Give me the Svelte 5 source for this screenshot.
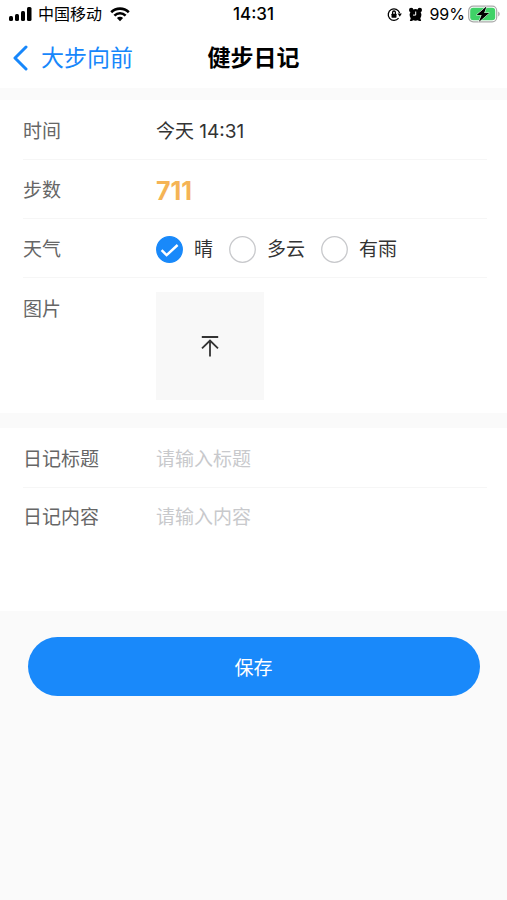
<script lang="ts">
  const weathers = ["晴", "多云", "有雨"];

  let weather = $state("晴");
  let title = $state("");
  let content = $state("");
</script>

<svelte:head>
  <title>健步日记</title>
</svelte:head>

<div class="page">
  <header>
    <div class="status">
      <div class="carrier">
        <svg width="24" height="16" viewBox="0 0 24 16" aria-hidden="true">
          <rect x="1" y="10" width="4" height="5" rx="1.5" />
          <rect x="7" y="8" width="4" height="7" rx="1.5" />
          <rect x="13" y="5" width="4" height="10" rx="1.5" />
          <rect x="19" y="1" width="4.5" height="14" rx="1.5" />
        </svg>
        <span>中国移动</span>
        <svg class="wifi" width="20" height="15" viewBox="0 0 20 15" aria-hidden="true">
          <path d="M1.2 5.2a12.6 12.6 0 0 1 17.6 0" />
          <path d="M4.4 8.6a8 8 0 0 1 11.2 0" />
          <path class="dot" d="M10 14.2 6.9 11.1a4.4 4.4 0 0 1 6.2 0z" />
        </svg>
      </div>
      <time>14:31</time>
      <div class="power">
        <svg width="15" height="15" viewBox="0 0 15 15" aria-hidden="true">
          <path class="ring" d="M11.6 11.2A5.8 5.8 0 1 1 12.6 6" />
          <path d="M10.6 6.6h4.2l-2 3.2z" />
          <rect x="4.5" y="6.7" width="5" height="4" rx="0.6" />
          <path class="ring" d="M5.6 7V5.4a1.4 1.4 0 0 1 2.8 0V7" />
        </svg>
        <svg width="15" height="15" viewBox="0 0 15 15" aria-hidden="true">
          <circle cx="7.5" cy="7.8" r="5.9" />
          <circle cx="3.2" cy="3" r="2.2" />
          <circle cx="11.8" cy="3" r="2.2" />
          <path d="M3 10.5 1.8 14h2.4L6 12zM12 10.5l1.2 3.5h-2.4L9 12z" />
          <path class="hands" d="M7.7 4.5v3.6H5" />
        </svg>
        <span>99%</span>
        <svg class="battery" width="33" height="18" viewBox="0 0 33 18" aria-hidden="true">
          <rect class="case" x="0.7" y="1.2" width="28" height="15.6" rx="4.5" />
          <rect class="charge" x="2.2" y="2.8" width="25" height="12.4" rx="3" />
          <path class="tip" d="M30.2 6.5c1.9.7 1.9 4.3 0 5z" />
          <path class="bolt" d="M18.6 1.2 8.6 9.9h5l-2.8 7 10.4-8.8h-5z" />
        </svg>
      </div>
    </div>
    <nav>
      <a href="#back">
        <svg width="16" height="26" viewBox="0 0 16 26" aria-hidden="true">
          <path d="M14 2 3 13l11 11" />
        </svg>
        大步向前
      </a>
      <h1>健步日记</h1>
    </nav>
  </header>

  <form onsubmit={(e) => e.preventDefault()}>
    <section>
      <div class="row">
        <span class="label">时间</span>
        <span>今天 14:31</span>
      </div>
      <div class="row">
        <span class="label">步数</span>
        <strong>711</strong>
      </div>
      <div class="row">
        <span class="label" id="weather-label">天气</span>
        <div class="options" role="radiogroup" aria-labelledby="weather-label">
          {#each weathers as item (item)}
            <label class="option">
              <input type="radio" name="weather" value={item} bind:group={weather} />
              <svg class="tick" width="27" height="27" viewBox="0 0 27 27" aria-hidden="true">
                <circle cx="13.5" cy="13.5" r="12.8" />
                {#if weather === item}
                  <path d="m5.6 14.2 5 5L21.6 9" />
                {/if}
              </svg>
              {item}
            </label>
          {/each}
        </div>
      </div>
      <div class="row picture">
        <span class="label">图片</span>
        <button type="button" class="upload" aria-label="图片">
          <svg width="18" height="22" viewBox="0 0 18 22" aria-hidden="true">
            <path d="M.8 2h16.4M9 21.4V5.4M1 13.4l8-7.8 8 7.8" />
          </svg>
        </button>
      </div>
    </section>

    <section>
      <div class="row">
        <label class="label" for="title">日记标题</label>
        <input id="title" type="text" placeholder="请输入标题" bind:value={title} />
      </div>
      <div class="row content">
        <label class="label" for="content">日记内容</label>
        <textarea id="content" placeholder="请输入内容" bind:value={content}></textarea>
      </div>
    </section>

    <button type="submit" class="save">保存</button>
  </form>
</div>

<style>
  :global(body) {
    background: #fafafa;
  }
  .page {
    color: #333;
    font-family: Inter, "Noto Sans CJK SC", sans-serif;
    font-size: 19px;
    line-height: 28px;
  }
  header {
    background: #fff;
    color: #000;
  }
  .status {
    display: grid;
    grid-template-columns: 1fr auto 1fr;
    align-items: center;
    height: 28px;
    padding: 0 8px;
    font-size: 16px;
  }
  .carrier,
  .power {
    display: flex;
    align-items: center;
    gap: 6px;
  }
  .power {
    justify-content: flex-end;
  }
  time {
    font-size: 17px;
    font-weight: 500;
  }
  svg {
    display: block;
    flex: none;
  }
  .wifi {
    margin-left: 2px;
  }
  .battery {
    margin: 0 -2px 0 -3px;
  }
  .wifi path,
  .ring {
    fill: none;
    stroke: #000;
    stroke-width: 2.6;
  }
  .wifi .dot {
    fill: #000;
    stroke: none;
  }
  .ring {
    stroke-width: 1.3;
  }
  .hands {
    fill: none;
    stroke: #fff;
    stroke-width: 1;
  }
  .case {
    fill: #fff;
    stroke: #aaa;
    stroke-width: 1.2;
  }
  .charge {
    fill: #3fd267;
  }
  .tip {
    fill: #aaa;
  }
  .bolt {
    stroke: #fff;
    stroke-width: 1;
    paint-order: stroke;
  }
  nav {
    display: grid;
    grid-template-columns: 1fr auto 1fr;
    align-items: center;
    height: 60px;
    padding: 0 12px;
  }
  nav a {
    display: flex;
    align-items: center;
    gap: 13px;
    color: #1787fb;
    font-size: 23px;
    text-decoration: none;
  }
  nav path {
    fill: none;
    stroke: #1787fb;
    stroke-width: 3;
    stroke-linecap: round;
    stroke-linejoin: round;
  }
  h1 {
    margin: 0;
    font-size: 23px;
    font-weight: 700;
  }
  section {
    margin-top: 12px;
    padding: 1px 20px 0 23px;
    background: #fff;
  }
  section + section {
    margin-top: 15px;
  }
  .row {
    display: grid;
    grid-template-columns: 133px 1fr;
    align-items: center;
    box-sizing: border-box;
    min-height: 59px;
    padding-top: 3px;
    border-bottom: 1px solid #f6f6f6;
  }
  .row:last-child {
    border-bottom: none;
  }
  .label {
    color: #666;
  }
  strong {
    color: #f5b455;
    font-size: 25px;
  }
  .options {
    display: flex;
    gap: 16px;
  }
  .option {
    position: relative;
    display: flex;
    align-items: center;
    gap: 11px;
  }
  .option input {
    position: absolute;
    left: 0;
    width: 27px;
    height: 27px;
    margin: 0;
    opacity: 0;
  }
  .tick {
    fill: #fff;
    stroke: #c8c9cc;
    stroke-width: 1.3;
  }
  .option input:checked + .tick {
    fill: #1989fa;
    stroke: #1989fa;
  }
  .tick path {
    fill: none;
    stroke: #fff;
    stroke-width: 2.4;
  }
  .picture {
    align-items: start;
    padding: 14px 0 13px;
  }
  .picture .label {
    padding-top: 4px;
  }
  .content {
    align-items: start;
    padding: 16px 0 13px;
  }
  .upload {
    display: grid;
    place-items: center;
    width: 108px;
    height: 108px;
    padding: 0;
    border: none;
    background: #f8f8f8;
  }
  .upload path {
    fill: none;
    stroke: #333;
    stroke-width: 1.8;
  }
  .row input[type="text"],
  textarea {
    width: 100%;
    box-sizing: border-box;
    padding: 0;
    border: none;
    outline: none;
    background: none;
    color: inherit;
    font: inherit;
  }
  textarea {
    display: block;
    height: 94px;
    resize: none;
  }
  ::placeholder {
    color: #c8c9cc;
    opacity: 1;
  }
  .save {
    display: block;
    width: calc(100% - 55px);
    height: 59px;
    margin: 26px auto;
    padding: 4px 0 0;
    border: none;
    border-radius: 30px;
    background: #1989fa;
    color: #fff;
    font: inherit;
  }
</style>
